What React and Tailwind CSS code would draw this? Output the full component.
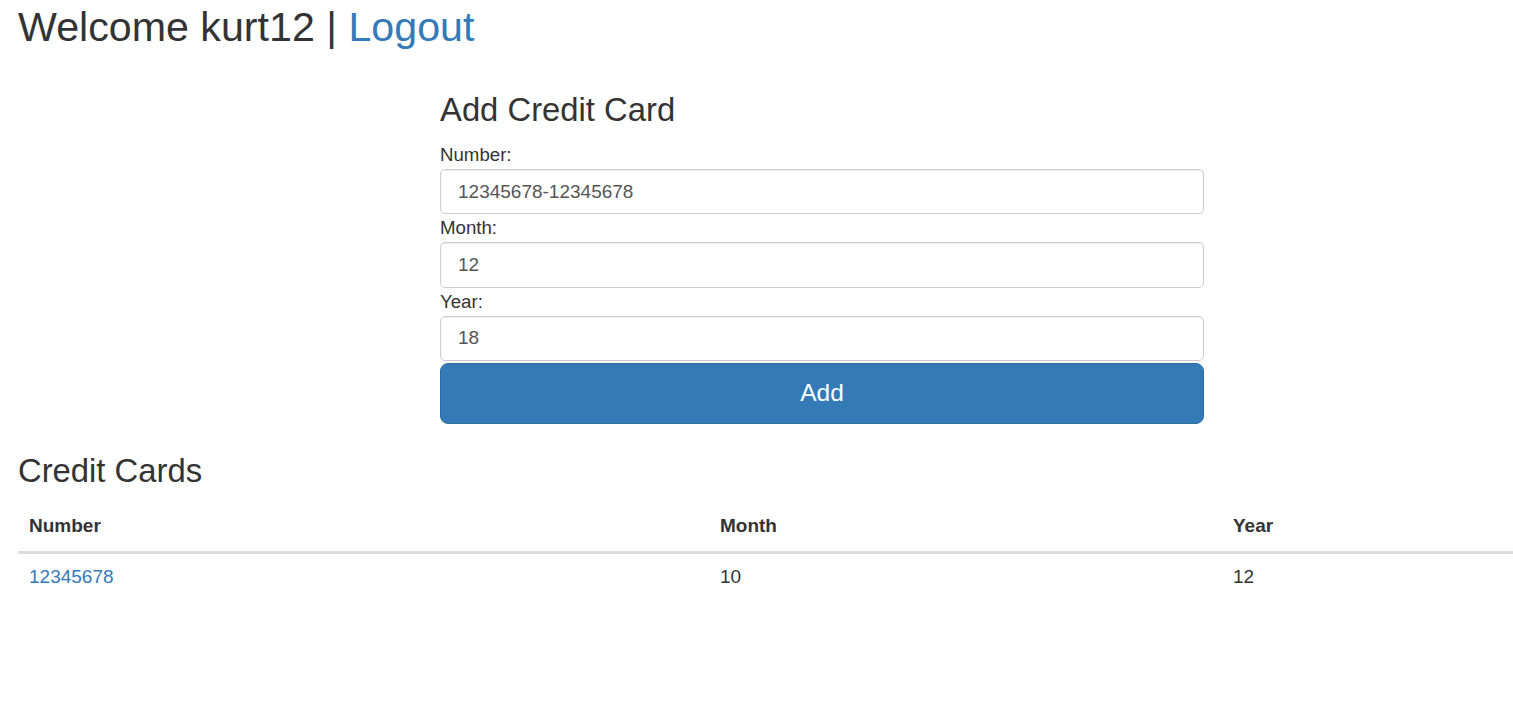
import { useState } from 'react';

const FONT = "font-['Liberation_Sans',Arial,Helvetica,sans-serif]";

const CARDS = [{ number: '12345678', month: '10', year: '12' }];

function Field({ label, value, onChange }) {
  return (
    <div>
      <label className="block h-[28px] text-[18.67px] leading-[28px] text-[#333]">{label}</label>
      <input
        type="text"
        value={value}
        onChange={(e) => onChange(e.target.value)}
        className="block h-[45.33px] w-full rounded-[5px] border border-[#ccc] bg-white px-[17px] text-[19px] leading-[26px] text-[#555] shadow-[inset_0_1px_1px_rgba(0,0,0,0.075)] outline-none"
      />
    </div>
  );
}

export default function App() {
  const [number, setNumber] = useState('12345678-12345678');
  const [month, setMonth] = useState('12');
  const [year, setYear] = useState('18');

  return (
    <div className={`${FONT} min-h-screen bg-white pl-[18px] text-[#333]`}>
      {/* Welcome line */}
      <div className="pt-[5px] text-[41.2px] leading-[45px]">
        Welcome kurt12 | <a href="#" className="text-[#337ab7]">Logout</a>
      </div>

      {/* Add form */}
      <div className="ml-[422px] w-[764px] pt-[42px]">
        <h3 className="text-[32.8px] leading-[35px]">Add Credit Card</h3>
        <div className="mt-[14px] flex flex-col">
          <Field label="Number:" value={number} onChange={setNumber} />
          <Field label="Month:" value={month} onChange={setMonth} />
          <Field label="Year:" value={year} onChange={setYear} />
          <button
            type="button"
            className="mt-[2px] h-[61px] w-full rounded-[8px] border border-[#2e6da4] bg-[#337ab7] text-[24.5px] text-white"
          >
            Add
          </button>
        </div>
      </div>

      {/* List */}
      <h3 className="mt-[29px] text-[32.8px] leading-[35px]">Credit Cards</h3>
      <table className="mt-[14px] w-[1495px] border-collapse text-[19px] leading-[26.67px]">
        <thead>
          <tr className="border-b-[3px] border-[#ddd] text-left font-bold">
            <th className="w-[691px] px-[11px] pt-[11px] pb-[11px]">Number</th>
            <th className="w-[513px] px-[11px] pt-[11px] pb-[11px]">Month</th>
            <th className="px-[11px] pt-[11px] pb-[11px]">Year</th>
          </tr>
        </thead>
        <tbody>
          {CARDS.map((c) => (
            <tr key={c.number}>
              <td className="px-[11px] py-[10px]">
                <a href="#" className="text-[#337ab7]">{c.number}</a>
              </td>
              <td className="px-[11px] py-[10px]">{c.month}</td>
              <td className="px-[11px] py-[10px]">{c.year}</td>
            </tr>
          ))}
        </tbody>
      </table>
    </div>
  );
}
